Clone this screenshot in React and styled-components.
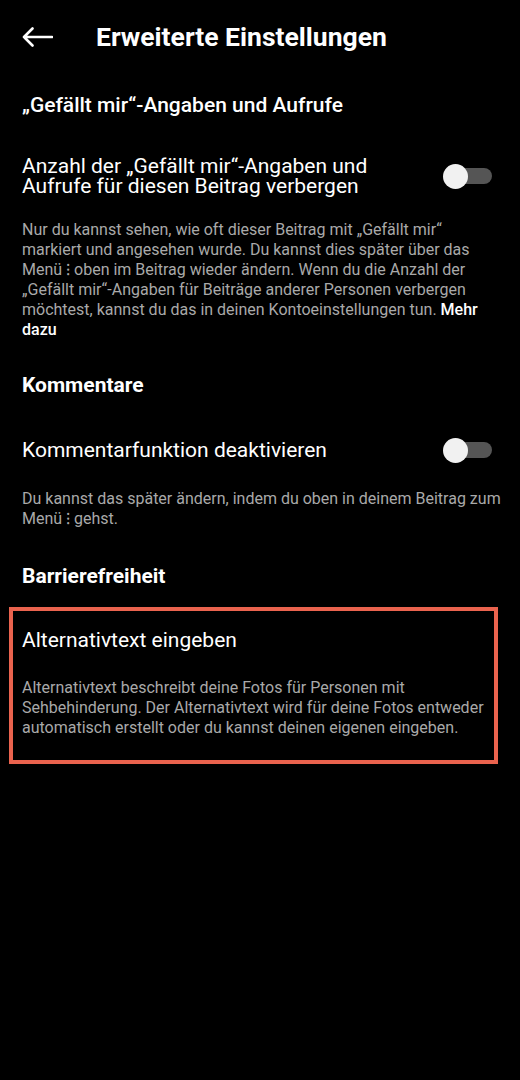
import React from "react";
import styled, { createGlobalStyle } from "styled-components";

const Global = createGlobalStyle`
  html, body { margin: 0; padding: 0; background: #000; }
  body { font-family: Roboto, "Liberation Sans", sans-serif; color: #fff; -webkit-font-smoothing: antialiased; }
`;

const Page = styled.div`
  width: 520px;
  min-height: 1080px;
  background: #000;
  display: flex;
  flex-direction: column;
`;

const Header = styled.header`
  height: 74px;
  display: flex;
  align-items: center;
  padding-left: 22px;
`;

const BackButton = styled.button`
  background: none;
  border: 0;
  padding: 0;
  width: 31px;
  height: 20px;
  display: flex;
  align-items: center;
  color: #fff;
`;

const Title = styled.h1`
  margin: 0 0 0 43px;
  font-size: 26.5px;
  line-height: 30px;
  font-weight: 700;
  color: #fff;
`;

const SectionTitle = styled.h2`
  margin: ${(p) => p.$mt}px 0 0;
  padding: 0 22px;
  font-size: 21px;
  line-height: 24px;
  font-weight: ${(p) => (p.$weight ? p.$weight : 700)};
  color: #fff;
`;

const Row = styled.div`
  margin-top: ${(p) => p.$mt}px;
  padding: 0 28px 0 22px;
  display: flex;
  align-items: center;
  justify-content: space-between;
`;

const Label = styled.div`
  font-size: 21px;
  line-height: 20px;
  color: #fff;
  max-width: ${(p) => p.$maxw || 420}px;
`;

const Desc = styled.p`
  margin: ${(p) => p.$mt}px 0 0;
  padding: 0 ${(p) => (p.$pr != null ? p.$pr : 15)}px 0 ${(p) => (p.$pl != null ? p.$pl : 22)}px;
  font-size: 16px;
  line-height: 20px;
  color: #a9a9a9;
`;

const Link = styled.span`
  color: #fff;
  font-weight: 500;
`;

const Track = styled.div`
  position: relative;
  width: 48px;
  height: 16px;
  border-radius: 8px;
  background: #555;
  flex-shrink: 0;
`;

const Knob = styled.div`
  position: absolute;
  left: -1px;
  top: -4.5px;
  width: 25px;
  height: 25px;
  border-radius: 50%;
  background: #f1f1f1;
`;

const Highlight = styled.section`
  margin: 19px 22px 0 9px;
  border: 4px solid #ea634e;
  padding: 19px 10px 22px 9px;
`;

const Toggle = () => (
  <Track>
    <Knob />
  </Track>
);

export default function App() {
  return (
    <Page>
      <Global />
      <Header>
        <BackButton aria-label="Zurück">
          <svg width="31" height="20" viewBox="0 0 31 20" fill="none">
            <path d="M30 10H2M10.5 1.5L2 10l8.5 8.5" stroke="#fff" strokeWidth="2.6" strokeLinecap="round" strokeLinejoin="round" />
          </svg>
        </BackButton>
        <Title>Erweiterte Einstellungen</Title>
      </Header>

      <SectionTitle $mt={19} $weight={500}>„Gefällt mir“-Angaben und Aufrufe</SectionTitle>
      <Row $mt={39}>
        <Label $maxw={390}>Anzahl der „Gefällt mir“-Angaben und Aufrufe für diesen Beitrag verbergen</Label>
        <Toggle />
      </Row>
      <Desc $mt={24}>
        Nur du kannst sehen, wie oft dieser Beitrag mit „Gefällt mir“ markiert und angesehen wurde. Du kannst dies später über das Menü ⁝ oben im Beitrag wieder ändern. Wenn du die Anzahl der „Gefällt mir“-Angaben für Beiträge anderer Personen verbergen möchtest, kannst du das in deinen Kontoeinstellungen tun. <Link>Mehr dazu</Link>
      </Desc>

      <SectionTitle $mt={33}>Kommentare</SectionTitle>
      <Row $mt={43}>
        <Label>Kommentarfunktion deaktivieren</Label>
        <Toggle />
      </Row>
      <Desc $mt={29}>
        Du kannst das später ändern, indem du oben in deinem Beitrag zum Menü ⁝ gehst.
      </Desc>

      <SectionTitle $mt={35}>Barrierefreiheit</SectionTitle>
      <Highlight>
        <Label>Alternativtext eingeben</Label>
        <Desc $mt={28} $pl={0} $pr={0}>
          Alternativtext beschreibt deine Fotos für Personen mit Sehbehinderung. Der Alternativtext wird für deine Fotos entweder automatisch erstellt oder du kannst deinen eigenen eingeben.
        </Desc>
      </Highlight>
    </Page>
  );
}
